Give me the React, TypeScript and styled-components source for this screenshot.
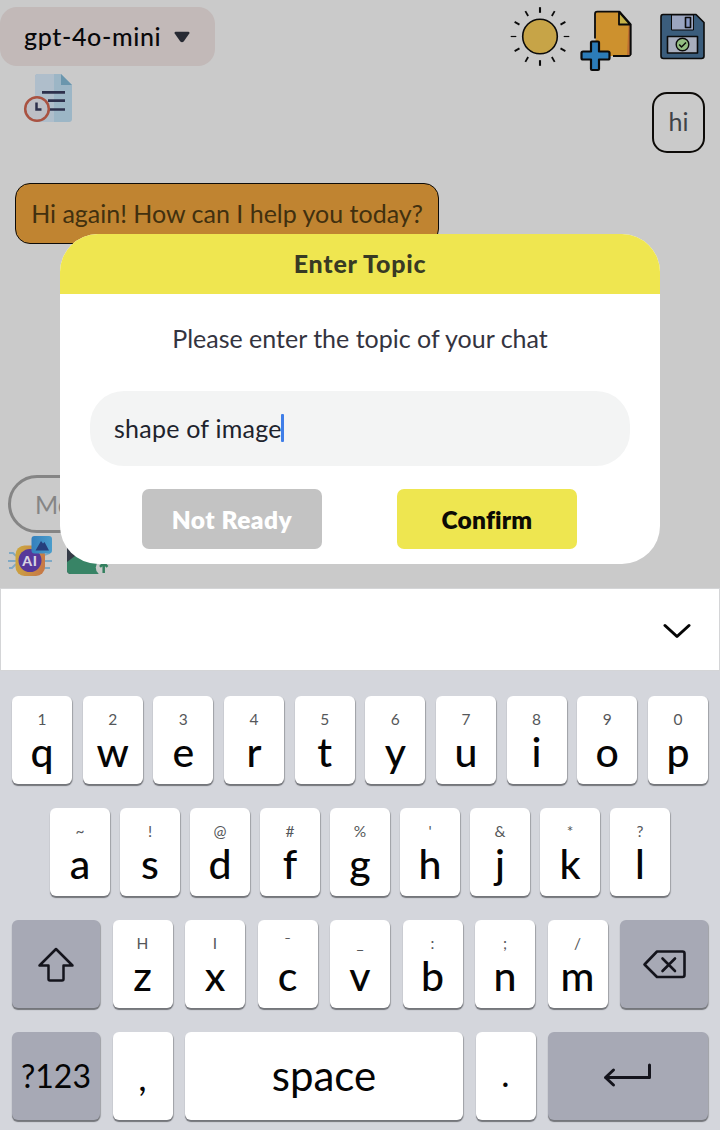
import React from "react";
import styled, { createGlobalStyle } from "styled-components";

const GlobalStyle = createGlobalStyle`
  * { box-sizing: border-box; }
  body {
    margin: 0;
    background: #cacaca;
    font-family: Lato, "Noto Sans", sans-serif;
    font-variant-ligatures: none;
  }
  button { font-family: inherit; border: 0; margin: 0; padding: 0; }
  svg { display: block; flex: none; }
`;

const Screen = styled.div`
  position: relative;
  display: flex;
  flex-direction: column;
  width: 720px;
  height: 1130px;
  overflow: hidden;
`;

const ChatPage = styled.main`
  display: flex;
  flex-direction: column;
  height: 588px;
  padding-top: 7px;
  background: #cacaca;
  overflow: hidden;
`;

const TopBar = styled.header`
  display: flex;
  justify-content: space-between;
  height: 59px;
  flex: none;
`;

const ModelPicker = styled.button`
  display: flex;
  align-items: center;
  gap: 13px;
  width: 215px;
  height: 59px;
  padding-left: 24px;
  border-radius: 17px;
  background: #c2b9b8;
  color: #08080a;
  font-size: 25px;
  font-weight: 500;
  letter-spacing: 0.65px;
  line-height: 59px;
`;

const TopActions = styled.div`
  display: flex;
  margin-right: 12px;
`;

const HistoryRow = styled.div`
  display: flex;
  justify-content: space-between;
  align-items: flex-start;
  height: 87px;
  padding: 8px 15px 0 22px;
  flex: none;
`;

const Bubble = styled.div<{ $bot?: boolean }>`
  width: ${(p) => (p.$bot ? "424px" : "53px")};
  height: 61px;
  margin-top: ${(p) => (p.$bot ? "30px" : "18px")};
  margin-left: ${(p) => (p.$bot ? "15px" : "0")};
  border: ${(p) => (p.$bot ? "1.5px" : "2px")} solid #0d0b08;
  border-radius: 15px;
  background: ${(p) => (p.$bot ? "#c08431" : "transparent")};
  color: ${(p) => (p.$bot ? "#41300f" : "#3f4347")};
  font-size: 25px;
  line-height: ${(p) => (p.$bot ? "58px" : "55px")};
  text-align: center;
  white-space: nowrap;
  flex: none;
`;

const Composer = styled.div`
  width: 420px;
  height: 58px;
  margin: auto 0 0 8px;
  padding-left: 24px;
  border: 3px solid #858585;
  border-radius: 29px;
  color: #858585;
  font-size: 25px;
  line-height: 53px;
  flex: none;
`;

const Attachments = styled.div`
  display: flex;
  gap: 12px;
  height: 55px;
  padding: 1px 0 0 7px;
  flex: none;
`;

const Dialog = styled.section`
  position: absolute;
  top: 234px;
  left: 60px;
  display: flex;
  flex-direction: column;
  align-items: center;
  width: 600px;
  height: 330px;
  border-radius: 38px;
  background: #fff;
  overflow: hidden;
`;

const DialogTitle = styled.h1`
  width: 100%;
  height: 60px;
  margin: 0;
  background: #efe650;
  color: #383a24;
  font-size: 25px;
  font-weight: 900;
  line-height: 59px;
  text-align: center;
  letter-spacing: 0.75px;
`;

const Prompt = styled.p`
  margin: 27px 0 0;
  color: #34343f;
  font-size: 25px;
  line-height: 34px;
`;

const TopicField = styled.div`
  display: flex;
  align-items: center;
  width: 540px;
  height: 75px;
  margin-top: 36px;
  padding: 0 0 2px 24px;
  border-radius: 34px;
  background: #f3f4f4;
  color: #20232c;
  font-size: 25px;
  letter-spacing: 0.23px;
`;

const Caret = styled.span`
  width: 3px;
  height: 28px;
  margin-left: -1px;
  border-radius: 1px;
  background: #3f7ee8;
`;

const DialogActions = styled.div`
  display: flex;
  gap: 75px;
  margin: 23px 1px 0 0;
`;

const ActionButton = styled.button<{ $primary?: boolean }>`
  width: 180px;
  height: 60px;
  border-radius: 7px;
  background: ${(p) => (p.$primary ? "#eee650" : "#c3c3c3")};
  color: ${(p) => (p.$primary ? "#0c0b05" : "#fff")};
  font-size: 24.5px;
  font-weight: 800;
  line-height: 59px;
  letter-spacing: ${(p) => (p.$primary ? "0.2px" : "0.5px")};
`;

const SuggestionBar = styled.div`
  display: flex;
  align-items: center;
  justify-content: flex-end;
  height: 83px;
  padding-right: 28px;
  padding-top: 3px;
  border: 1px solid #d4d5d7;
  background: #fff;
  flex: none;
`;

const Keyboard = styled.div`
  display: flex;
  flex-direction: column;
  gap: 22px;
  flex: 1;
  padding: 25px 12px 0;
  background: #d4d6dc;
`;

const KeyRow = styled.div<{ $inset?: boolean }>`
  display: flex;
  justify-content: space-between;
  height: 90px;
  padding: 0 ${(p) => (p.$inset ? "38px" : "0")};
  flex: none;
`;

const Key = styled.button<{ $w?: number; $dark?: boolean }>`
  display: flex;
  flex-direction: column;
  align-items: center;
  width: ${(p) => p.$w ?? 60}px;
  height: 88px;
  border-radius: 6px;
  background: ${(p) => (p.$dark ? "#a7a9b5" : "#fff")};
  box-shadow: 0 2px 1px #74767b, 1px 1px 1px #a5a7ab;
  color: #050505;
`;

const Hint = styled.span`
  height: 19px;
  margin-top: 14px;
  color: #55575a;
  font-size: 15.5px;
  line-height: 19px;
`;

const Letter = styled.span`
  height: 49px;
  margin-top: -2px;
  font-size: 41px;
  line-height: 49px;
  font-weight: 500;
`;

const KeyLabel = styled.span<{ $size?: number; $drop?: number }>`
  margin: ${(p) => p.$drop ?? 0}px auto 0;
  font-size: ${(p) => p.$size ?? 41}px;
  line-height: 87px;
  font-weight: 400;
`;

const KeyIcon = styled.svg`
  margin: auto;
  fill: none;
  stroke: #14141c;
  stroke-width: 3;
  stroke-linecap: round;
  stroke-linejoin: round;
`;

const SunIcon = () => (
  <svg width="71" height="62" viewBox="0 0 71 62" stroke="#0b0b0b" strokeLinecap="butt">
    <circle cx="31" cy="29.500" r="17.300" fill="#c7a447" strokeWidth="1.600" />
    {Array.from({ length: 12 }, (_, i) => (
      <path key={i} d="M31 0.200v5.600" strokeWidth={i % 3 ? 1.8 : i % 6 ? 1.2 : 2.1} transform={`rotate(${i * 30} 31 29.5)`} />
    ))}
  </svg>
);

const NewFileIcon = () => (
  <svg width="54" height="66" viewBox="580 7 54 66" stroke="#0b0b0b" strokeWidth="1.8" strokeLinejoin="round">
    <path d="M595.500 42V13.500q0-2 2-2H620L630.500 24v32H596Z" fill="#cd912e" stroke="none" />
    <path d="M595 38.500V14q0-2.300 2.300-2.300H619.500L630.500 24v29.500q0 2.500-2.500 2.500H613" fill="none" />
    <path d="M628.500 25h2v30H627Z" fill="#bd6e31" stroke="none" />
    <path d="M619 12v12.500h11Z" fill="#c7b349" />
    <path d="M630.500 24v31" />
    <path d="M591 42.500q0-1 1-1h6q1 0 1 1V51.500h9q1.500 0 1.500 1.500v5q0 1.500-1.500 1.500h-9V69q0 1-1 1h-6q-1 0-1-1v-9.500h-8q-1.500 0-1.500-1.500v-5q0-1.500 1.500-1.500h8Z" fill="#2c7cb8" strokeWidth="2.200" />
  </svg>
);

const SaveIcon = () => (
  <svg width="74" height="66" viewBox="634 7 74 66" stroke="#0b0b0b" strokeWidth="1.600" strokeLinejoin="round">
    <path d="M663 14.500h33l8 8V56q0 2.500-2.500 2.500H663.500q-2.500 0-2.500-2.500V17q0-2.500 2-2.500Z" fill="#3b5d7c" />
    <path d="M671.500 15h22v15h-22Z" fill="#9ba5c0" strokeWidth="1" />
    <path d="M685.500 17.500h5v10h-5Z" fill="#8797c3" />
    <path d="M667.500 36.500h30v16.500h-30Z" fill="#a8aebd" />
    <circle cx="682.500" cy="44.500" r="6.300" fill="#92bd81" strokeWidth="1.400" />
    <path d="m679.200 44.500 2.300 2.500 4.500-4.500" fill="none" strokeWidth="1.500" />
  </svg>
);

const HistoryIcon = () => (
  <svg width="52" height="52" viewBox="22 74 52 52" fill="none">
    <path d="M35 77q0-3 3-3h23l11 11v34q0 3-3 3H38q-3 0-3-3Z" fill="#9cb6c6" />
    <path d="M35 77q0-3 3-3h16v48H38q-3 0-3-3Z" fill="#afbecb" />
    <path d="M61 74v11h11Z" fill="#6a96ad" />
    <path d="M42 92.300h23M48 100.700h17M48 109.500h17" stroke="#2d304c" strokeWidth="2.700" />
    <circle cx="37" cy="109" r="11.800" fill="#bdbfc6" stroke="#a95241" strokeWidth="2.500" />
    <path d="M36.500 102.500v7h5" stroke="#2d304c" strokeWidth="2.500" />
  </svg>
);

const AiImageIcon = () => (
  <svg width="47" height="46" viewBox="7 534 47 46">
    <defs>
      <linearGradient id="chip" x1="0" x2="1" y1="0" y2="0.2">
        <stop offset="0" stopColor="#ccaa3f" />
        <stop offset="1" stopColor="#c77b46" />
      </linearGradient>
      <linearGradient id="photo" x1="0" x2="1">
        <stop offset="0" stopColor="#3480bd" />
        <stop offset="1" stopColor="#4b9dcb" />
      </linearGradient>
    </defs>
    <path d="M9 553h4l3 3M8 561h9M9 568h3l4-4M50 553l-5 2M52 561h-8M50 568h-6" fill="none" stroke="#7fa9c5" strokeWidth="1.800" />
    <rect x="15.500" y="545.500" width="29.500" height="30.500" rx="9" fill="url(#chip)" />
    <circle cx="30" cy="560.500" r="11.500" fill="#57389a" />
    <text x="30" y="566" textAnchor="middle" fill="#d8d3e2" fontSize="14" fontWeight="900" letterSpacing="0.8" fontFamily="Lato">AI</text>
    <rect x="31.500" y="536" width="20.500" height="17.500" rx="3" fill="url(#photo)" />
    <path d="m35.500 550.500 5.500-9.500 2 2.500 1.500-1.500 4.500 8.500Z" fill="#263f7c" />
  </svg>
);

const UploadImageIcon = () => (
  <svg width="46" height="46" viewBox="66 534 46 46">
    <rect x="67" y="537" width="38" height="37" rx="4" fill="#343b46" />
    <path d="M67 562l8-6 30 8v10H71q-4 0-4-4Z" fill="#388466" />
    <circle cx="104" cy="567.500" r="8.200" fill="#cacaca" />
    <path d="M103.700 573v-8M100 566.800l1.500-1.500h4.500l1.500 1.500" fill="none" stroke="#34805f" strokeWidth="2.500" />
  </svg>
);

const firstRow = ["q1", "w2", "e3", "r4", "t5", "y6", "u7", "i8", "o9", "p0"];
const secondRow = ["a~", "s!", "d@", "f#", "g%", "h'", "j&", "k*", "l?"];
const thirdRow = ["zH", "xI", "cˉ", "v_", "b:", "n;", "m/"];

const LetterKey = ({ pair }: { pair: string }) => (
  <Key>
    <Hint>{pair[1]}</Hint>
    <Letter>{pair[0]}</Letter>
  </Key>
);

export default function App() {
  return (
    <Screen>
      <GlobalStyle />
      <ChatPage>
        <TopBar>
          <ModelPicker>
            gpt-4o-mini
            <svg width="16" height="12" viewBox="0 0 16 12">
              <path d="M1.500.800h13q1.500.200.800 1.700l-5.600 8q-1.700 1.500-3.400 0l-5.600-8Q0 1 1.500.800Z" fill="#272a33" />
            </svg>
          </ModelPicker>
          <TopActions>
            <SunIcon />
            <NewFileIcon />
            <SaveIcon />
          </TopActions>
        </TopBar>
        <HistoryRow>
          <HistoryIcon />
          <Bubble>hi</Bubble>
        </HistoryRow>
        <Bubble $bot>Hi again! How can I help you today?</Bubble>
        <Composer>Message</Composer>
        <Attachments>
          <AiImageIcon />
          <UploadImageIcon />
        </Attachments>
      </ChatPage>
      <SuggestionBar>
        <svg width="28" height="18" viewBox="0 0 28 18" fill="none" stroke="#050505" strokeWidth="3" strokeLinecap="round" strokeLinejoin="round">
          <path d="M2 3.500 14 14.500 26 3.500" />
        </svg>
      </SuggestionBar>
      <Keyboard>
        <KeyRow>{firstRow.map((k) => <LetterKey key={k} pair={k} />)}</KeyRow>
        <KeyRow $inset>{secondRow.map((k) => <LetterKey key={k} pair={k} />)}</KeyRow>
        <KeyRow>
          <Key $w={88} $dark>
            <KeyIcon width="38" height="38" viewBox="37 945 38 38">
              <path d="M56 949 39.500 965.500H48.500V979q0 1.500 1.500 1.500H62q1.500 0 1.500-1.500V965.500H72.500Z" strokeWidth="2.500" />
            </KeyIcon>
          </Key>
          {thirdRow.map((k) => <LetterKey key={k} pair={k} />)}
          <Key $w={88} $dark>
            <KeyIcon width="46" height="32" viewBox="641 948 46 32">
              <path d="M657 951.500H682.500q2 0 2 2V975q0 2-2 2H657L644.500 964.500ZM662.500 958.500 675 971M675 958.500 662.500 971" strokeWidth="2.600" />
            </KeyIcon>
          </Key>
        </KeyRow>
        <KeyRow>
          <Key $w={88} $dark><KeyLabel $size={32}>?123</KeyLabel></Key>
          <Key><KeyLabel $size={37} $drop={1}>,</KeyLabel></Key>
          <Key $w={278}><KeyLabel $size={42}>space</KeyLabel></Key>
          <Key><KeyLabel $size={35} $drop={-2}>.</KeyLabel></Key>
          <Key $w={160} $dark>
            <KeyIcon width="50" height="26" viewBox="603 1063 50 26">
              <path d="M649.500 1065V1077.500H605.500M613.500 1070 605.500 1077.500 613.500 1085" />
            </KeyIcon>
          </Key>
        </KeyRow>
      </Keyboard>
      <Dialog>
        <DialogTitle>Enter Topic</DialogTitle>
        <Prompt>Please enter the topic of your chat</Prompt>
        <TopicField>shape of image<Caret /></TopicField>
        <DialogActions>
          <ActionButton>Not Ready</ActionButton>
          <ActionButton $primary>Confirm</ActionButton>
        </DialogActions>
      </Dialog>
    </Screen>
  );
}
